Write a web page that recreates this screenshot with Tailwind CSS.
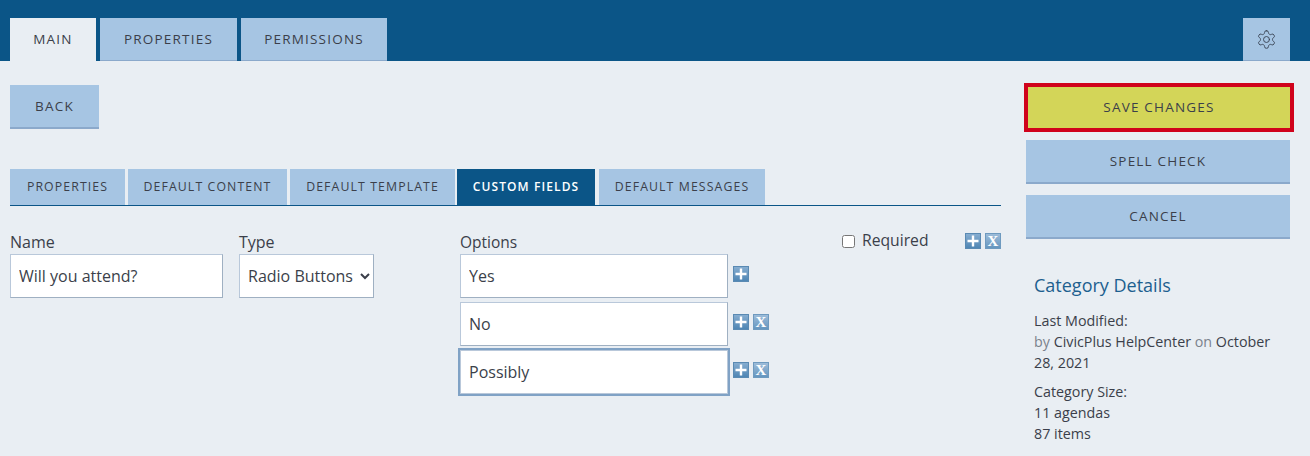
<!DOCTYPE html>
<html lang="en">
<head>
    <meta charset="UTF-8">
    <title>Custom Fields</title>
    <script src="https://cdn.jsdelivr.net/npm/@tailwindcss/browser@4"></script>
</head>
<body class="bg-[#e9eef3] font-['Open_Sans',sans-serif] text-[16px] text-[#3b3f4a] h-[456px] overflow-hidden">
    <!-- Top tabs -->
    <header class="bg-[#0b5587] h-[61px] pt-[18px] pl-[10px] pr-[20px] flex">
        <a class="w-[86px] h-[43px] bg-[#e9eef3] flex items-center justify-center text-[13.5px] tracking-[1.2px]">MAIN</a>
        <a class="ml-[4px] w-[137px] h-[43px] bg-[#a6c5e3] border-b border-[#8ba9cb] flex items-center justify-center text-[13.5px] tracking-[1.2px]">PROPERTIES</a>
        <a class="ml-[4px] w-[146px] h-[43px] bg-[#a6c5e3] border-b border-[#8ba9cb] flex items-center justify-center text-[13.5px] tracking-[1.2px]">PERMISSIONS</a>
        <button class="ml-auto w-[47px] h-[43px] bg-[#a6c5e3] border-b border-[#8ba9cb] flex items-center justify-center">
            <svg width="21" height="21" viewBox="0 0 24 24" fill="none" stroke="#3b4656" stroke-width="1.1" stroke-linecap="round" stroke-linejoin="round">
                <path d="M12.22 2h-.44a2 2 0 0 0-2 2v.18a2 2 0 0 1-1 1.73l-.43.25a2 2 0 0 1-2 0l-.15-.08a2 2 0 0 0-2.73.73l-.22.38a2 2 0 0 0 .73 2.73l.15.1a2 2 0 0 1 1 1.72v.51a2 2 0 0 1-1 1.74l-.15.09a2 2 0 0 0-.73 2.73l.22.38a2 2 0 0 0 2.73.73l.15-.08a2 2 0 0 1 2 0l.43.25a2 2 0 0 1 1 1.73V20a2 2 0 0 0 2 2h.44a2 2 0 0 0 2-2v-.18a2 2 0 0 1 1-1.73l.43-.25a2 2 0 0 1 2 0l.15.08a2 2 0 0 0 2.73-.73l.22-.39a2 2 0 0 0-.73-2.73l-.15-.08a2 2 0 0 1-1-1.74v-.5a2 2 0 0 1 1-1.74l.15-.09a2 2 0 0 0 .73-2.73l-.22-.38a2 2 0 0 0-2.73-.73l-.15.08a2 2 0 0 1-2 0l-.43-.25a2 2 0 0 1-1-1.73V4a2 2 0 0 0-2-2z"/>
                <circle cx="12" cy="12" r="3.4"/>
            </svg>
        </button>
    </header>

    <div class="flex">
        <!-- Main column -->
        <main class="w-[1001px] pl-[10px] pt-[24px] shrink-0">
            <button class="w-[89px] h-[44px] bg-[#a6c5e3] border-b-2 border-[#8ba9cb] text-[13.5px] tracking-[1.2px]">BACK</button>

            <nav class="mt-[40px] h-[37px] flex border-b border-[#0b5587] text-[12.3px] tracking-[1.1px]">
                <a class="w-[115px] h-[36px] bg-[#a6c5e3] flex items-center justify-center">PROPERTIES</a>
                <a class="ml-[3px] w-[159px] h-[36px] bg-[#a6c5e3] flex items-center justify-center">DEFAULT CONTENT</a>
                <a class="ml-[3px] w-[165px] h-[36px] bg-[#a6c5e3] flex items-center justify-center">DEFAULT TEMPLATE</a>
                <a class="ml-[2px] w-[138px] h-[36px] bg-[#0b5587] text-white text-[12px] font-semibold flex items-center justify-center">CUSTOM FIELDS</a>
                <a class="ml-[4px] w-[166px] h-[36px] bg-[#a6c5e3] flex items-center justify-center">DEFAULT MESSAGES</a>
            </nav>

            <div class="mt-[27px] flex items-start">
                <div class="w-[213px] shrink-0">
                    <label class="block h-[21px] leading-[19px]">Name</label>
                    <input type="text" value="Will you attend?" class="w-full h-[44px] bg-white border border-[#b9c8da] border-r-[#9fb0c2] border-b-[#9fb0c2] px-[8px] outline-none">
                </div>
                <div class="ml-[16px] w-[135px] shrink-0">
                    <label class="block h-[21px] leading-[19px]">Type</label>
                    <select class="w-full h-[44px] bg-white border border-[#b9c8da] border-r-[#9fb0c2] border-b-[#9fb0c2] pl-[4px] outline-none">
                        <option>Radio Buttons</option>
                    </select>
                </div>
                <div class="ml-[86px] w-[268px] shrink-0">
                    <label class="block h-[21px] leading-[19px] text-[15.5px]">Options</label>
                    <input type="text" value="Yes" class="block w-full h-[44px] bg-white border border-[#b9c8da] border-r-[#9fb0c2] border-b-[#9fb0c2] px-[8px] outline-none">
                    <input type="text" value="No" class="block mt-[4px] w-full h-[44px] bg-white border border-[#b9c8da] border-r-[#9fb0c2] border-b-[#9fb0c2] px-[8px] outline-none">
                    <input type="text" value="Possibly" class="block mt-[4px] w-full h-[44px] bg-white border border-[#b9c8da] outline-2 outline-[#80a2c5] px-[8px]">
                </div>
                <!-- Add / remove buttons beside each option -->
                <div class="ml-[5px] w-[36px] pt-[33px] flex flex-col gap-[32px] shrink-0">
                    <div class="flex gap-[4px]">
                        <span class="w-[16px] h-[16px] border border-[#5a8ab3] bg-gradient-to-b from-[#86add0] to-[#4f86b4] flex items-center justify-center"><svg width="12" height="12" viewBox="0 0 12 12" fill="#fff"><path d="M4.800 0.500h2.400v4.300h4.300v2.400H7.200v4.300H4.800V7.200H0.500V4.800h4.300z"/></svg></span>
                    </div>
                    <div class="flex gap-[4px]">
                        <span class="w-[16px] h-[16px] border border-[#5a8ab3] bg-gradient-to-b from-[#86add0] to-[#4f86b4] flex items-center justify-center"><svg width="12" height="12" viewBox="0 0 12 12" fill="#fff"><path d="M4.800 0.500h2.400v4.300h4.300v2.400H7.200v4.300H4.800V7.200H0.500V4.800h4.300z"/></svg></span>
                        <span class="w-[16px] h-[16px] border border-[#6e9abf] bg-gradient-to-b from-[#9dbcd9] to-[#6596bf] text-white font-['Liberation_Serif',serif] font-bold text-[15px] leading-[14px] text-center">X</span>
                    </div>
                    <div class="flex gap-[4px]">
                        <span class="w-[16px] h-[16px] border border-[#5a8ab3] bg-gradient-to-b from-[#86add0] to-[#4f86b4] flex items-center justify-center"><svg width="12" height="12" viewBox="0 0 12 12" fill="#fff"><path d="M4.800 0.500h2.400v4.300h4.300v2.400H7.200v4.300H4.800V7.200H0.500V4.800h4.300z"/></svg></span>
                        <span class="w-[16px] h-[16px] border border-[#6e9abf] bg-gradient-to-b from-[#9dbcd9] to-[#6596bf] text-white font-['Liberation_Serif',serif] font-bold text-[15px] leading-[14px] text-center">X</span>
                    </div>
                </div>
                <label class="ml-[73px] -mt-[4px] flex items-center h-[24px] w-[123px] shrink-0 text-[15.7px]">
                    <input type="checkbox" class="w-[13px] h-[13px] mr-[7px]">Required
                </label>
                <div class="flex gap-[4px] shrink-0">
                    <span class="w-[16px] h-[16px] border border-[#5a8ab3] bg-gradient-to-b from-[#86add0] to-[#4f86b4] flex items-center justify-center"><svg width="12" height="12" viewBox="0 0 12 12" fill="#fff"><path d="M4.800 0.500h2.400v4.300h4.300v2.400H7.200v4.300H4.800V7.200H0.500V4.800h4.300z"/></svg></span>
                    <span class="w-[16px] h-[16px] border border-[#6e9abf] bg-gradient-to-b from-[#9dbcd9] to-[#6596bf] text-white font-['Liberation_Serif',serif] font-bold text-[15px] leading-[14px] text-center">X</span>
                </div>
            </div>
        </main>

        <!-- Right column -->
        <aside class="ml-[23px] w-[270px] pt-[22px]">
            <button class="w-full h-[49px] bg-[#d3d558] border-[4px] border-[#d0021b] text-[13.5px] tracking-[1.2px]">SAVE CHANGES</button>
            <button class="block ml-[2px] mt-[8px] w-[264px] h-[44px] pt-[1px] bg-[#a6c5e3] border-b-2 border-[#8ba9cb] text-[13.5px] tracking-[1.2px]">SPELL CHECK</button>
            <button class="block ml-[2px] mt-[11px] w-[264px] h-[44px] pt-[1px] bg-[#a6c5e3] border-b-2 border-[#8ba9cb] text-[13.5px] tracking-[1.2px]">CANCEL</button>
            <div class="ml-[10px] mt-[33px] w-[250px] text-[14.3px] leading-[21px]">
                <h2 class="text-[18px] leading-[26px] text-[#1d5f8f]">Category Details</h2>
                <p class="mt-[12px]">Last Modified:<br><span class="text-[#7b828c]">by</span> CivicPlus HelpCenter <span class="text-[#7b828c]">on</span> October 28, 2021</p>
                <p class="mt-[8px]">Category Size:<br>11 agendas<br>87 items</p>
            </div>
        </aside>
    </div>
</body>
</html>
